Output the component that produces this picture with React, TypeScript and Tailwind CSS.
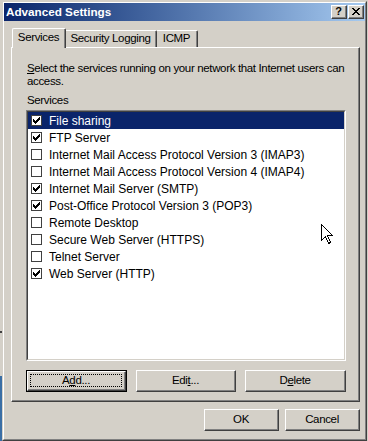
import React from "react";

const rows = [
  { label: "File sharing", on: true },
  { label: "FTP Server", on: true },
  { label: "Internet Mail Access Protocol Version 3 (IMAP3)", on: false },
  { label: "Internet Mail Access Protocol Version 4 (IMAP4)", on: false },
  { label: "Internet Mail Server (SMTP)", on: true },
  { label: "Post-Office Protocol Version 3 (POP3)", on: true },
  { label: "Remote Desktop", on: false },
  { label: "Secure Web Server (HTTPS)", on: false },
  { label: "Telnet Server", on: false },
  { label: "Web Server (HTTP)", on: true },
];

// classic 7x7 check glyph, one 1x3 bar per column
const checkCols = [2, 3, 4, 3, 2, 1, 0];

function Check({ on }: { on: boolean }) {
  return (
    <div className="w-[11px] h-[11px] shrink-0 bg-white border border-[#404040] flex items-center justify-center">
      {on && (
        <svg width="7" height="7" viewBox="0 0 7 7" shapeRendering="crispEdges">
          {checkCols.map((y, x) => (
            <rect key={x} x={x} y={y} width="1" height="3" fill="#000" />
          ))}
        </svg>
      )}
    </div>
  );
}

function Btn({ children, w, def }: { children: React.ReactNode; w: string; def?: boolean }) {
  return (
    <div className={`${w} h-[22px] flex ${def ? "border border-black" : ""}`}>
      <div className="flex-1 flex border border-t-white border-l-white border-r-[#404040] border-b-[#404040]">
        <div className="flex-1 flex border-r border-b border-r-[#808080] border-b-[#808080]">
          {def ? (
            <div className="flex-1 m-[2px] border border-dotted border-black flex items-center justify-center">
              {children}
            </div>
          ) : (
            <div className="flex-1 flex items-center justify-center">{children}</div>
          )}
        </div>
      </div>
    </div>
  );
}

function CapBtn({ children }: { children: React.ReactNode }) {
  return (
    <div className="w-[16px] h-[14px] flex bg-[#d4d0c8] border border-t-white border-l-white border-r-[#404040] border-b-[#404040]">
      <div className="flex-1 flex items-center justify-center border-r border-b border-r-[#808080] border-b-[#808080]">
        {children}
      </div>
    </div>
  );
}

const closeRows = ["XX....XX", ".XX..XX.", "..XXXX..", "...XX...", "..XXXX..", ".XX..XX.", "XX....XX"];

export default function App() {
  return (
    <div className="w-[368px] h-[441px] flex bg-[#d4d0c8] overflow-hidden relative text-black text-[11.5px] tracking-[-0.35px] font-['Liberation_Sans',Arial,sans-serif]">
      {/* window behind */}
      <div className="w-[2px] flex flex-col">
        <div className="h-[331px]" />
        <div className="h-[2px] bg-[#404040]" />
        <div className="h-[43px]" />
        <div className="flex-1 bg-[#3a6ea5]" />
      </div>

      {/* dialog frame */}
      <div className="w-[365px] mt-[1px] flex border border-t-[#d4d0c8] border-l-[#d4d0c8] border-r-[#404040] border-b-[#404040]">
        <div className="flex-1 flex flex-col border border-t-white border-l-white border-r-[#808080] border-b-[#808080]">
          {/* title bar */}
          <div className="h-[18px] shrink-0 flex items-center justify-between pl-[2px] pr-[1px] bg-gradient-to-r from-[#0a246a] to-[#a6caf0]">
            <span className="text-white font-bold text-[11.7px] tracking-normal">Advanced Settings</span>
            <div className="flex gap-[1px]">
              <CapBtn>
                <span className="font-bold text-[11px] leading-none tracking-normal">?</span>
              </CapBtn>
              <CapBtn>
                <svg width="8" height="7" viewBox="0 0 8 7" shapeRendering="crispEdges">
                  {closeRows.map((r, y) =>
                    r.split("").map((c, x) => (c === "X" ? <rect key={`${x}-${y}`} x={x} y={y} width="1" height="1" fill="#000" /> : null))
                  )}
                </svg>
              </CapBtn>
            </div>
          </div>

          {/* body */}
          <div className="flex-1 flex flex-col pt-[7px] pl-[7px] pr-[5px] pb-[8px]">
            {/* tabs */}
            <div className="h-[19px] shrink-0 flex items-end pl-[1px]">
              <div className="relative z-10 w-[54px] h-[20px] -mb-px flex bg-[#d4d0c8] border-t border-l border-r border-t-white border-l-white border-r-[#404040] rounded-t-[2px]">
                <div className="flex-1 flex items-center justify-center border-r border-r-[#808080] pb-[2px]">Services</div>
              </div>
              <div className="w-[91px] h-[17px] flex border-t border-r border-t-white border-r-[#404040] rounded-tr-[2px]">
                <div className="flex-1 flex items-center justify-center border-r border-r-[#808080]">Security Logging</div>
              </div>
              <div className="w-[41px] h-[17px] flex border-t border-r border-t-white border-r-[#404040] rounded-tr-[2px]">
                <div className="flex-1 flex items-center justify-center border-r border-r-[#808080]">ICMP</div>
              </div>
            </div>

            {/* tab panel */}
            <div className="flex-1 flex border border-t-white border-l-white border-r-[#404040] border-b-[#404040]">
              <div className="flex-1 flex flex-col pt-[14px] pl-[15px] pr-[12px] border-r border-b border-r-[#808080] border-b-[#808080]">
                <p className="leading-[13px] whitespace-nowrap">
                  <u className="underline-offset-[1px]">S</u>elect the services running on your network that Internet users can
                  <br />
                  access.
                </p>
                <div className="mt-[6px] leading-[13px]">Services</div>

                <div className="mt-[3px] -ml-px h-[251px] flex border border-t-[#808080] border-l-[#808080] border-r-white border-b-white">
                  <div className="flex-1 bg-white text-[12px] tracking-normal border border-t-[#404040] border-l-[#404040] border-r-[#d4d0c8] border-b-[#d4d0c8]">
                    {rows.map((r, i) => (
                      <div
                        key={r.label}
                        className={`h-[17px] flex items-center gap-[7px] pl-[3px] whitespace-nowrap ${
                          i === 0 ? "bg-[#0a246a] text-white" : ""
                        }`}
                      >
                        <Check on={r.on} />
                        <span>{r.label}</span>
                      </div>
                    ))}
                  </div>
                </div>

                <div className="mt-[9px] -ml-px flex justify-between">
                  <Btn w="w-[101px]" def>
                    <span>
                      A<u>d</u>d...
                    </span>
                  </Btn>
                  <Btn w="w-[100px]">
                    <span>
                      Edi<u>t</u>...
                    </span>
                  </Btn>
                  <Btn w="w-[101px]">
                    <span>
                      D<u>e</u>lete
                    </span>
                  </Btn>
                </div>
              </div>
            </div>

            {/* footer */}
            <div className="mt-[7px] flex justify-end gap-[6px]">
              <Btn w="w-[75px]">OK</Btn>
              <Btn w="w-[75px]">Cancel</Btn>
            </div>
          </div>
        </div>
      </div>

      {/* mouse pointer */}
      <svg className="absolute left-[321px] top-[224px]" width="13" height="21" viewBox="0 0 13 21" shapeRendering="crispEdges">
        <path d="M0.5 0.5 L0.5 16.5 L4.5 12.5 L7.5 19.5 L9.5 18.5 L6.5 11.5 L11.5 11.5 Z" fill="#fff" stroke="#000" strokeWidth="1" />
      </svg>
    </div>
  );
}
